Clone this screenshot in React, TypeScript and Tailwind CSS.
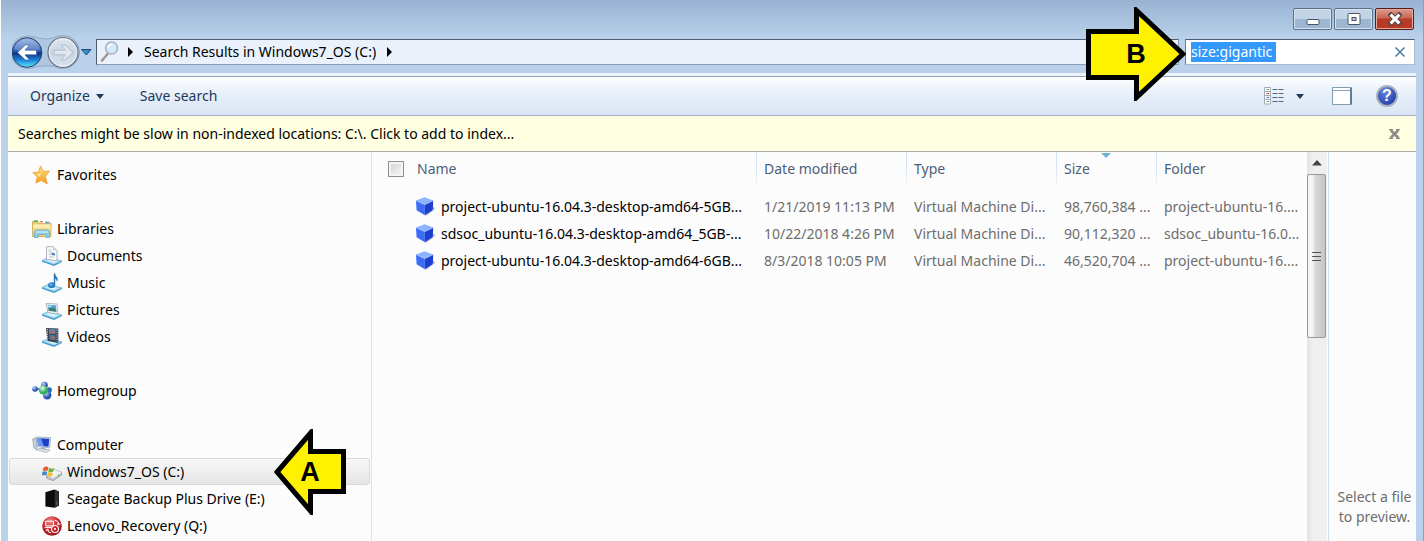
import React, { useEffect, useRef } from 'react';

const Svg = ({ children, size = 20 }: { children: React.ReactNode; size?: number }) => (
  <svg width={size} height={size} viewBox="0 0 20 20" className="shrink-0" aria-hidden="true">
    {children}
  </svg>
);

/* Blue glass tray that the library icons stand on */
const Tray = () => (
  <>
    <path d="M0 14.5 6 11.5 20 15 12 18.6Z" fill="#a9dcf3" stroke="#62aed6" strokeWidth=".7" />
    <path d="M0 14.5 12 18.6 20 15V16L12 20 0 15.8Z" fill="#3f9ccc" />
    <path d="M4 14.6 7 13 16 15 12 17Z" fill="#d9f3fd" />
  </>
);

const StarIcon = () => (
  <Svg>
    <defs>
      <linearGradient id="star" x1="0" y1="0" x2="0" y2="1">
        <stop offset="0" stopColor="#ffe27a" />
        <stop offset="1" stopColor="#f59a1e" />
      </linearGradient>
    </defs>
    <path d="M8.6.8 11.2 6.5 17.6 6 13.4 11.2 15.3 18.9 9.4 15.5 3.8 18 5.2 11.8.8 7.6 6.5 7Z" fill="url(#star)" stroke="#e8a13c" strokeWidth=".8" />
    <path d="M8.6 3.5 9.8 8 5 9 7 12 9 8.5Z" fill="#fff3b8" opacity=".8" />
  </Svg>
);

const LibrariesIcon = () => (
  <Svg>
    <path d="M.5 2.5H5L6.5 4H19V17.5H.5Z" fill="#e9cf79" stroke="#c7a54a" strokeWidth=".8" />
    <path d="M2 1.4H6V3H2Z" fill="#53a944" />
    <path d="M8 2.2H13V4H8Z" fill="#fff" />
    <path d="M8.4 2H10.5V3.4H8.4Z" fill="#d64b35" />
    <path d="M13 2.6H17V4.4H13Z" fill="#5f9fd9" />
    <path d="M1.2 5.5H18.4V13H1.2Z" fill="#fbeeb0" />
    <path d="M1.2 9H18.4V16.5H1.2Z" fill="#efd98a" />
    <path d="M2.5 18.5V13Q2.5 11 5 11H15Q17.5 11 17.5 13V18.5H14V15.5H6V18.5Z" fill="#8fcbea" stroke="#5aa3cf" strokeWidth=".7" />
    <path d="M4 12.4H16V13.6H4Z" fill="#d8f1fc" />
  </Svg>
);

const DocumentsIcon = () => (
  <Svg>
    <Tray />
    <path d="M4.5.8 11 .5 15 4.5V15L7 13.6 4.5 14Z" fill="#f8fafc" stroke="#9aa5b1" strokeWidth=".8" />
    <path d="M11 .5V4.6L15 4.5Z" fill="#c9d3de" />
    <path d="M6.5 4H9.5M6.5 6H9M7 8.5H9M7 11H12" stroke="#a8b4c4" strokeWidth=".8" />
    <path d="M9.5 6.2 13 7.6V9.6L9.5 9Z" fill="#4c84b8" />
  </Svg>
);

const MusicIcon = () => (
  <Svg>
    <Tray />
    <ellipse cx="9.6" cy="12.2" rx="3.6" ry="2.9" fill="#2a84c6" />
    <ellipse cx="8.8" cy="11.4" rx="1.5" ry="1" fill="#7cc3ea" />
    <path d="M11.8.6H13.2Q13.4 3 15.2 4.6 16.4 6.4 14.9 9 15 6.4 13.2 5.8V12H11.8Z" fill="#2677b8" />
  </Svg>
);

const PicturesIcon = () => (
  <Svg>
    <Tray />
    <path d="M4 3.4 15 3.9 16 14 6 12.6Z" fill="#eef2f5" stroke="#a3afb8" strokeWidth=".8" />
    <path d="M5.6 4.8 13.8 5.3 14.4 11.8 6.8 10.8Z" fill="#4da2d8" />
    <path d="M6.4 8.6 10 7.6 14.2 9.6 14.4 11.8 6.8 10.8Z" fill="#3f7c69" />
    <path d="M6 5.6 10 5.8 9 7.2 6.2 7Z" fill="#c9e8f7" />
  </Svg>
);

const VideosIcon = () => (
  <Svg>
    <Tray />
    <path d="M4 1 16.3 1.4V16L5.4 14Z" fill="#3a414a" />
    <path d="M7 2 13.6 2.2V7L7 6.8Z" fill="#4c8bc6" />
    <path d="M7 7.8 13.6 8V13.6L7.4 12.6Z" fill="#3b76b0" />
    <path d="M8 5 11 3.6 13 6.4 9 6.6ZM8.4 10.6 11 9 13.2 10.4 11 12Z" fill="#d9622d" />
    <path d="M5.4 2V13.5M15 2.4V14.8" stroke="#d5dbe1" strokeWidth="1" strokeDasharray="1.2 1.2" />
  </Svg>
);

const HomegroupIcon = () => (
  <Svg>
    <defs>
      <radialGradient id="ballBlue" cx=".35" cy=".3">
        <stop offset="0" stopColor="#c9d8fb" />
        <stop offset="1" stopColor="#2a52b4" />
      </radialGradient>
      <radialGradient id="ballGreen" cx=".4" cy=".3">
        <stop offset="0" stopColor="#e2fbe2" />
        <stop offset="1" stopColor="#2fab62" />
      </radialGradient>
    </defs>
    <path d="M3 8 11 8 12 4 15 14" fill="none" stroke="#2e8cb0" strokeWidth="2" />
    <circle cx="3" cy="8" r="2.8" fill="url(#ballBlue)" />
    <circle cx="12.4" cy="4.2" r="3.4" fill="url(#ballBlue)" />
    <circle cx="17.2" cy="9" r="2.7" fill="#286fb0" />
    <circle cx="15.2" cy="14.2" r="4.2" fill="url(#ballBlue)" />
    <circle cx="11.4" cy="9" r="4.6" fill="url(#ballGreen)" />
  </Svg>
);

const ComputerIcon = () => (
  <Svg>
    <path d="M.6 4 4.5 2.8V14.4L1.8 13Z" fill="#c6cfdb" stroke="#8995a6" strokeWidth=".6" />
    <path d="M3.8 2 18.6 2.6 17.6 13 5 11.6Z" fill="#dbe3ee" stroke="#8f9db1" strokeWidth=".7" />
    <path d="M5.2 3.2 17.3 3.8 16.5 11.8 6.2 10.7Z" fill="#1d3fc4" />
    <path d="M5.2 3.2 9 3.4 12 11.3 6.2 10.7Z" fill="#6a9af0" />
    <path d="M9.4 12 13 12.4 14 15 9 14.6Z" fill="#a9b4c2" />
    <path d="M4 14.6 8 13.4 18 15.2 14.5 17.6Z" fill="#dde1e7" stroke="#959eab" strokeWidth=".6" />
  </Svg>
);

const OsDriveIcon = () => (
  <Svg>
    <path d="M4.5 13.5 12 7.5 19.5 10.5V13L11 18.6 4.5 16Z" fill="#c6cacd" stroke="#85898d" strokeWidth=".7" />
    <path d="M4.5 13.5 12 7.5 19.5 10.5 11.2 16Z" fill="#f0f2f3" />
    <circle cx="16.8" cy="13.4" r=".9" fill="#5cc44a" />
    <path d="M1.5 5.8Q4 3.6 6.4 5.4L5.4 9Q3 7.8.6 9.2Z" fill="#e8582a" />
    <path d="M7.2 5.8Q9.6 7.4 12.2 6L11.2 9.6Q8.6 10.8 6.2 9.4Z" fill="#6cb52d" />
    <path d="M.4 10Q3 8.6 5.2 10L4.2 13.4Q2.4 12.4 0 13.4Z" fill="#3d86cf" />
    <path d="M6 10.2Q8.6 11.6 11 10.4L10 14Q7.4 15.2 5 13.8Z" fill="#f7bf2a" />
  </Svg>
);

const ExternalDriveIcon = () => (
  <Svg>
    <path d="M3.4 3.2 12.4.6 17 2.6V16.6L12.8 18.8 3.4 17.6Z" fill="#0c0c0c" />
    <path d="M12.6 1 16.8 2.8V16.6L12.8 18.6Z" fill="#2e2e2e" />
    <path d="M14.8 12V16" stroke="#777" strokeWidth=".7" />
  </Svg>
);

const RecoveryIcon = () => (
  <Svg>
    <defs>
      <radialGradient id="recovery" cx=".4" cy=".25" r=".8">
        <stop offset="0" stopColor="#f08a88" />
        <stop offset=".5" stopColor="#d0262b" />
        <stop offset="1" stopColor="#9c1218" />
      </radialGradient>
    </defs>
    <circle cx="10" cy="10" r="9.8" fill="url(#recovery)" />
    <path d="M3.8 5.2H11.4V10H3.8Z" fill="none" stroke="#fff" strokeWidth="1" />
    <path d="M2.6 11.6H9" stroke="#fff" strokeWidth="1" />
    <path d="M12.8 4.2Q16.8 4.6 16.8 8.4M15 7.4 16.8 9 18.4 7.2M5.4 13.6Q6 16.6 9 17M4 15 5.4 13 7.2 14.6" fill="none" stroke="#fff" strokeWidth="1" />
    <circle cx="13" cy="13" r="3.5" fill="none" stroke="#fff" strokeWidth="1.1" />
    <circle cx="13" cy="13" r="1.1" fill="#fff" />
  </Svg>
);

const CubeIcon = () => (
  <Svg>
    <path d="M10 18.6 18 13V9.600L20 11.400 12 18.2Z" fill="#6f7599" opacity=".6" />
    <path d="M9.6.2 18.2 3.6 9.8 7.6 1 3.5Z" fill="#8db4ff" />
    <path d="M1 3.5 9.8 7.6V18.2L1.6 13.2Z" fill="#3c6cf6" />
    <path d="M18.2 3.6 9.8 7.6V18.2L17.8 13.2Z" fill="#1c3fd0" />
    <path d="M1 3.5 9.8 7.6 18.2 3.6" fill="none" stroke="#b5cdff" strokeWidth=".7" />
  </Svg>
);

type NavItem = { label: string; icon: React.FC; selected?: boolean };
type NavGroup = NavItem & { items: NavItem[] };

const groups: NavGroup[] = [
  { label: 'Favorites', icon: StarIcon, items: [] },
  {
    label: 'Libraries',
    icon: LibrariesIcon,
    items: [
      { label: 'Documents', icon: DocumentsIcon },
      { label: 'Music', icon: MusicIcon },
      { label: 'Pictures', icon: PicturesIcon },
      { label: 'Videos', icon: VideosIcon },
    ],
  },
  { label: 'Homegroup', icon: HomegroupIcon, items: [] },
  {
    label: 'Computer',
    icon: ComputerIcon,
    items: [
      { label: 'Windows7_OS (C:)', icon: OsDriveIcon, selected: true },
      { label: 'Seagate Backup Plus Drive (E:)', icon: ExternalDriveIcon },
      { label: 'Lenovo_Recovery (Q:)', icon: RecoveryIcon },
    ],
  },
];

const files = [
  { name: 'project-ubuntu-16.04.3-desktop-amd64-5GB...', date: '1/21/2019 11:13 PM', size: '98,760,384 ...', folder: 'project-ubuntu-16....' },
  { name: 'sdsoc_ubuntu-16.04.3-desktop-amd64_5GB-...', date: '10/22/2018 4:26 PM', size: '90,112,320 ...', folder: 'sdsoc_ubuntu-16.0...' },
  { name: 'project-ubuntu-16.04.3-desktop-amd64-6GB...', date: '8/3/2018 10:05 PM', size: '46,520,704 ...', folder: 'project-ubuntu-16....' },
];

const TitleBar = () => (
  <div className="flex h-[38px] items-start justify-end gap-[2px] pt-2 pr-[2px]">
    <button aria-label="Minimize" className="flex h-[22px] w-[39px] items-center justify-center rounded-[2px] border border-[#5d7189] bg-linear-to-b from-[#c3d4e7] from-50% to-[#9db7d3] to-50% shadow-[inset_0_0_0_1px_#d5e2f0]">
      <svg width="14" height="14" viewBox="0 0 14 14">
        <rect x="1" y="7.500" width="12" height="5" rx="1" fill="#fff" stroke="#4b5462" />
      </svg>
    </button>
    <button aria-label="Maximize" className="flex h-[22px] w-[39px] items-center justify-center rounded-[2px] border border-[#5d7189] bg-linear-to-b from-[#c3d4e7] from-50% to-[#9db7d3] to-50% shadow-[inset_0_0_0_1px_#d5e2f0]">
      <svg width="14" height="14" viewBox="0 0 14 14">
        <rect x="1" y="1.5" width="12" height="11" rx="1" fill="#fff" stroke="#4b5462" />
        <rect x="5" y="5.5" width="4" height="3" fill="#b5c8dd" stroke="#4b5462" />
      </svg>
    </button>
    <button aria-label="Close" className="flex h-[22px] w-[39px] items-center justify-center rounded-[2px] border border-[#571d1e] bg-linear-to-b from-[#dc9a8e] via-[#c96554] via-45% to-[#b63a26] to-50% shadow-[inset_0_0_0_1px_#e3aa9f]">
      <svg width="14" height="14" viewBox="0 0 14 14">
        <path d="M3 3 11 11M11 3 3 11" stroke="#54444c" strokeWidth="5" strokeLinecap="square" />
        <path d="M2.6 2.6 11.4 11.4M11.4 2.6 2.6 11.4" stroke="#fff" strokeWidth="3" />
      </svg>
    </button>
  </div>
);

const HistoryButtons = () => (
  <div className="relative flex h-[34px] w-[84px] shrink-0 items-center">
    <svg width="84" height="34" viewBox="0 0 84 34" className="absolute inset-0" aria-hidden="true">
      <defs>
        <linearGradient id="back" x1="0" y1="0" x2="0" y2="1">
          <stop offset="0" stopColor="#8eaee0" />
          <stop offset=".46" stopColor="#2c5cb8" />
          <stop offset=".52" stopColor="#0c3385" />
          <stop offset=".75" stopColor="#1d83d8" />
          <stop offset="1" stopColor="#5ceaff" />
        </linearGradient>
        <linearGradient id="forward" x1="0" y1="0" x2="0" y2="1">
          <stop offset="0" stopColor="#dfe7ef" />
          <stop offset=".5" stopColor="#c8d4e1" />
          <stop offset="1" stopColor="#d7e3ef" />
        </linearGradient>
      </defs>
      <path d="M15 1Q22 1 27 3 34 5 41 3 46 .5 51 .5A16.500 16.500 0 0 1 51 33.500Q46 33.500 42 31.500 34 30 26 31.500 21 33.500 15 33.500A16 16 0 0 1 15 1Z" fill="#aec6e0" stroke="#93aac5" />
      <circle cx="15" cy="17.5" r="14.8" fill="url(#back)" stroke="#2a3f68" strokeWidth="1" />
      <path d="M1.8 14A13.6 13.6 0 0 1 28.2 14Q15 20 1.8 14Z" fill="#fff" opacity=".2" />
      <path d="M5.500 17.5 13.500 10H17.500L13 15.2H24.500V19.8H13L17.500 25H13.500Z" fill="#fff" stroke="#1a3c7c" strokeWidth=".5" />
      <circle cx="51" cy="17.5" r="15" fill="url(#forward)" stroke="#66717f" strokeWidth="1.2" />
      <circle cx="51" cy="17.5" r="13.8" fill="none" stroke="#eef3f8" />
      <path d="M61 17.5 53 10H49L53.5 15.2H42V19.8H53.5L49 25H53Z" fill="#e1e7ee" stroke="#a8b6c5" strokeWidth=".8" />
      <path d="M69.500 14.5H79L74.3 20Z" fill="#3a8ccb" stroke="#174a7c" />
    </svg>
    <button aria-label="Back" className="relative h-8 w-[32px] rounded-full" />
    <button aria-label="Forward" className="relative h-8 w-[35px] rounded-full" />
    <button aria-label="Recent pages" className="relative h-8 w-[15px]" />
  </div>
);

const NavBar = () => {
  const search = useRef<HTMLInputElement>(null);

  useEffect(() => {
    search.current?.focus();
    search.current?.select();
  }, []);

  return (
    <div className="flex h-[35px] items-start pr-px pl-1">
      <div className="-mt-[3px]">
        <HistoryButtons />
      </div>
      <div className="mt-px flex h-[26px] min-w-0 flex-1 items-center border border-[#8b9db5] border-t-[#4f5d6e] border-l-[#4f5d6e] bg-[#eaf1fa] pl-[3px]">
        <svg width="20" height="22" viewBox="0 0 20 22" aria-hidden="true">
          <path d="M8 12.5 2 19.5" stroke="#9b9895" strokeWidth="2.6" strokeLinecap="round" />
          <circle cx="11.5" cy="7" r="6" fill="#d3e8f8" stroke="#a9b3bd" strokeWidth="1.6" />
          <path d="M8 6.5Q9 3.2 12.5 3.2" fill="none" stroke="#fff" strokeWidth="1.6" />
        </svg>
        <svg width="24" height="12" viewBox="0 0 24 12" aria-hidden="true">
          <path d="M8 1 13 6 8 11Z" fill="#000" />
        </svg>
        <a href="#results" className="text-black">Search Results in Windows7_OS (C:)</a>
        <svg width="24" height="12" viewBox="0 0 24 12" aria-hidden="true">
          <path d="M11 1 16 6 11 11Z" fill="#000" />
        </svg>
      </div>
      <div className="relative mt-px ml-[6px] flex h-[26px] w-[230px] shrink-0 items-center border border-[#a9bace] border-t-[#4f5d6e] border-l-[#6c7b8e] bg-white pr-2 pl-[5px]">
        <input
          ref={search}
          aria-label="Search"
          defaultValue="size:gigantic "
          className="h-5 min-w-0 flex-1 text-black outline-none selection:bg-[#3399ff] selection:text-white"
        />
        <button aria-label="Clear search">
          <svg width="12" height="12" viewBox="0 0 12 12">
            <path d="M1.5 1.5 10.5 10.5M10.5 1.5 1.5 10.5" stroke="#4a7ba6" strokeWidth="1.5" />
          </svg>
        </button>
        <div className="absolute -top-[33px] right-[228px] z-10 flex h-[94px] w-[100px] items-center justify-center text-[27px] font-bold text-black">
          <svg width="100" height="94" viewBox="0 0 100 94" className="absolute inset-0" aria-hidden="true">
            <path d="M2.5 24.500H50.500V3.500L97 47 50.500 90.500V70.500H2.500Z" fill="#fff200" stroke="#000" strokeWidth="5" />
          </svg>
          <span className="relative font-['Liberation_Sans']">B</span>
        </div>
      </div>
    </div>
  );
};

const Toolbar = () => (
  <div className="flex h-10 items-center border-t border-b border-t-[#8fa3bc] border-b-[#a0afc3] bg-linear-to-b from-[#fdfeff] via-[#e6eef9] via-50% to-[#dae5f4] pr-[18px] pl-[22px] text-[#1e395b]">
    <button className="flex items-center gap-[6px]">
      Organize
      <svg width="8" height="5" viewBox="0 0 8 5">
        <path d="M0 0H8L4 5Z" fill="#1e395b" />
      </svg>
    </button>
    <button className="ml-9">Save search</button>
    <div className="ml-auto flex items-center">
      <button aria-label="Change your view">
        <svg width="20" height="18" viewBox="0 0 20 18">
          <path d="M.5.5H6.500V17H.5ZM.5 4.500H6.500M.5 8.500H6.500M.5 12.500H6.500" fill="#fff" stroke="#a3adb9" />
          <path d="M2.500 2.500H5M2.500 14.500H5" stroke="#72ac45" strokeWidth="1.200" />
          <path d="M2.500 6.500H5" stroke="#d4432e" strokeWidth="1.200" />
          <path d="M2.500 10.500H5" stroke="#3b7fc4" strokeWidth="1.200" />
          <path d="M8.500 2.500H19.500M8.500 6.500H19.500M8.500 10.500H19.500M8.500 14.500H19.500" stroke="#55677c" strokeDasharray="5 1" />
        </svg>
      </button>
      <button aria-label="More view options" className="ml-3">
        <svg width="8" height="5" viewBox="0 0 8 5">
          <path d="M0 0H8L4 5Z" fill="#1e395b" />
        </svg>
      </button>
      <button aria-label="Show the preview pane" className="ml-7">
        <svg width="20" height="18" viewBox="0 0 20 18">
          <path d="M.5.5H19.500V17.500H.5Z" fill="#fff" stroke="#7f9bb0" />
          <path d="M1 3.500H18" stroke="#7fa3c0" />
          <path d="M19 1V17" stroke="#5b8290" strokeWidth="2" />
        </svg>
      </button>
      <button aria-label="Get help" className="ml-6 flex h-[22px] w-[22px] items-center justify-center rounded-full border-2 border-[#a7b0bd] bg-radial-[at_40%_20%] from-[#6a8ae2] to-[#0f2b9c] font-['Liberation_Sans'] text-base font-bold text-white">
        ?
      </button>
    </div>
  </div>
);

const SideBar = () => (
  <nav className="w-[364px] shrink-0 border-r border-[#d6e5f5] pt-[9px]">
    {groups.map(({ label, icon: Icon, items }) => (
      <section key={label} className="mb-[27px] last:mb-0">
        <a href={`#${label}`} className="flex h-[27px] items-center gap-[5px] pl-6">
          <Icon />
          {label}
        </a>
        {items.map(({ label: text, icon: ItemIcon, selected }) => (
          <div key={text} className="relative px-px">
            <a
              href={`#${text}`}
              className={
                selected
                  ? 'flex h-[27px] items-center gap-[5px] rounded-[3px] border border-[#d9d9d9] bg-linear-to-b from-[#f8f8f8] to-[#e5e5e5] pl-8'
                  : 'flex h-[27px] items-center gap-[5px] pl-[33px]'
              }
            >
              <ItemIcon />
              {text}
            </a>
            {selected && (
              <div className="absolute -top-[29px] right-[25px] z-10 flex h-[86px] w-[72px] items-center justify-center text-[27px] font-bold text-black">
                <svg width="72" height="86" viewBox="0 0 72 86" className="absolute inset-0" aria-hidden="true">
                  <path d="M69.500 22.500H36.500V4L3 43 36.500 82V62.500H69.500Z" fill="#fff200" stroke="#000" strokeWidth="5" />
                </svg>
                <span className="relative font-['Liberation_Sans']">A</span>
              </div>
            )}
          </div>
        ))}
      </section>
    ))}
  </nav>
);

/* The separator is a one pixel wide gradient on the cell's left edge */
const headCell =
  'relative h-[41px] pb-2 pl-2 text-left font-normal text-[#4c607a] bg-linear-to-b from-[#d5e5f5] from-40% to-transparent to-90% bg-[length:1px_100%] bg-no-repeat';

const FileTable = () => (
  <table className="w-full table-fixed border-collapse self-start whitespace-nowrap text-[#6d6d6d]">
    <colgroup>
      <col />
      <col className="w-[150px]" />
      <col className="w-[150px]" />
      <col className="w-[100px]" />
      <col className="w-[151px]" />
    </colgroup>
    <thead>
      <tr>
        <th className="h-[41px] pb-2 pl-4 text-left font-normal text-[#4c607a]">
          <label className="flex items-center gap-[13px]">
            <input type="checkbox" className="h-4 w-4 appearance-none border border-[#8e8f8f] bg-linear-to-br from-[#cfd2d6] to-[#f6f6f6] shadow-[inset_0_0_0_2px_#f4f4f4]" />
            Name
          </label>
        </th>
        <th className={headCell}>Date modified</th>
        <th className={headCell}>Type</th>
        <th className={headCell}>
          Size
          <svg width="10" height="5" viewBox="0 0 10 5" className="absolute top-px left-[45px]" aria-hidden="true">
            <path d="M0 0H10L5 5Z" fill="#6fb3d4" />
          </svg>
        </th>
        <th className={headCell}>Folder</th>
      </tr>
    </thead>
    <tbody>
      {files.map((file) => (
        <tr key={file.date} className="h-[27px]">
          <td className="pl-[43px] text-black">
            <span className="flex items-center gap-[6px]">
              <CubeIcon />
              {file.name}
            </span>
          </td>
          <td className="pl-2">{file.date}</td>
          <td className="pl-2">Virtual Machine Di...</td>
          <td className="pl-2">{file.size}</td>
          <td className="pl-2">{file.folder}</td>
        </tr>
      ))}
    </tbody>
  </table>
);

const ScrollBar = () => (
  <div className="flex w-5 shrink-0 flex-col bg-linear-to-r from-[#e3e3e3] to-[#f0f0f0] to-30%">
    <button aria-label="Scroll up" className="flex h-[22px] items-center justify-center">
      <svg width="10" height="6" viewBox="0 0 10 6">
        <path d="M0 5.500 5 0 10 5.500Z" fill="#444" />
      </svg>
    </button>
    <div className="flex h-[164px] w-[19px] flex-col items-center justify-center gap-[3px] rounded-[2px] border border-[#979797] bg-linear-to-r from-[#f5f5f5] from-30% via-[#dadadc] via-40% to-[#c5c5c8]">
      <div className="h-px w-[9px] bg-[#555]" />
      <div className="h-px w-[9px] bg-[#555]" />
      <div className="h-px w-[9px] bg-[#555]" />
    </div>
  </div>
);

const App = () => {
  return (
    <div className="flex min-h-screen flex-col border-r border-l border-r-[#35c3ea] border-l-white bg-linear-to-b from-[#98b3d2] to-[#b9d1ea] to-[38px] px-[7px] font-['Noto_Sans','Open_Sans',sans-serif] text-sm leading-5 text-black">
      <TitleBar />
      <NavBar />
      <div className="flex flex-1 flex-col border-t-[3px] border-[#eef4fb] bg-[#fcfcfc]">
        <Toolbar />
        <div className="flex h-9 items-center justify-between border-b border-[#a9a9a9] bg-[#ffffe1] pr-4 pl-[10px]">
          <a href="#index">Searches might be slow in non-indexed locations: C:\. Click to add to index...</a>
          <button aria-label="Close message">
            <svg width="11" height="10" viewBox="0 0 11 10">
              <path d="M1.500 1 9.500 9M9.500 1 1.500 9" stroke="#8c8c8c" strokeWidth="2.500" />
              <path d="M0 .5H4M7 .5H11M0 9.500H4M7 9.500H11" stroke="#8c8c8c" />
            </svg>
          </button>
        </div>
        <div className="flex flex-1">
          <SideBar />
          <main id="results" className="flex min-w-0 flex-1">
            <FileTable />
          </main>
          <ScrollBar />
          <aside className="ml-px flex w-[88px] shrink-0 flex-col justify-end border-l border-[#cfe0f2] pb-[14px] pl-1 text-center text-[#6d6d6d]">
            <p>Select a file to preview.</p>
          </aside>
        </div>
      </div>
    </div>
  );
};

export default App;
